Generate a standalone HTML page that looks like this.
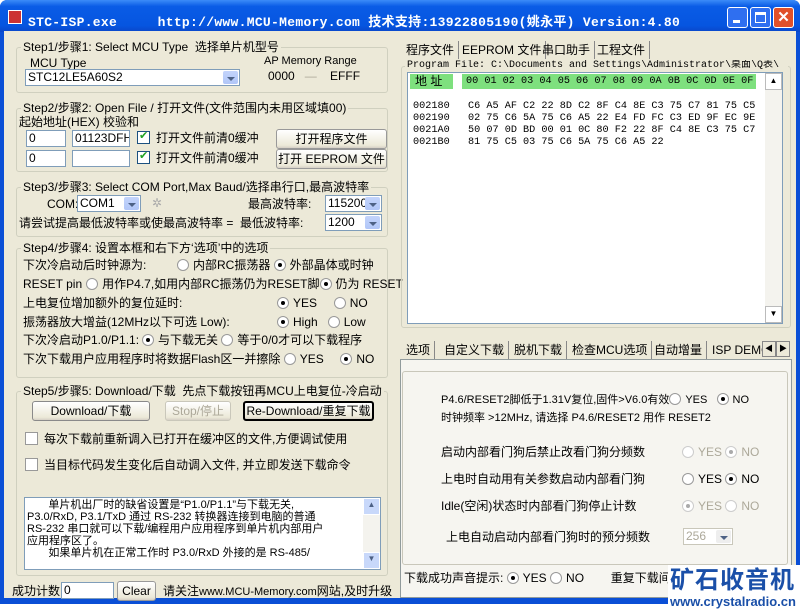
<!DOCTYPE html>
<html><head><meta charset="utf-8"><style>
*{box-sizing:border-box;margin:0;padding:0}
body{width:800px;height:611px;background:#fff;position:relative;overflow:hidden;font:12px/14px "Liberation Sans","Noto Sans CJK SC",sans-serif;color:#000}
.a{position:absolute;white-space:nowrap}
#win{position:absolute;left:0;top:0;width:800px;height:604px;background:#0a4fd6;border-radius:7px 7px 0 0}
#title{position:absolute;left:0;top:0;width:800px;height:32px;border-radius:7px 7px 0 0;background:linear-gradient(#3c8cf8,#0a5ce6 20%,#0655e0 80%,#0a46c8)}
#body{position:absolute;left:4px;top:31px;width:792px;height:567px;background:#ece9d8}
.g{position:absolute;border:1px solid #d0d0bf;border-radius:3px}
.lg{position:absolute;background:#ece9d8;padding:0 2px;top:-8px;left:4px;white-space:nowrap}
.in{position:absolute;background:#fff;border:1px solid #7f9db9;padding-left:2px;line-height:15px;height:17px;white-space:nowrap;overflow:hidden}
.btn{position:absolute;border:1px solid #003c74;border-radius:3px;background:linear-gradient(#fff,#ece9d8 85%,#d6d0c5);text-align:center;line-height:18px;white-space:nowrap}
.dd{position:absolute;right:1px;top:1px;bottom:1px;width:15px;background:linear-gradient(#c3d4fb,#b1c6f8);border-radius:2px}
.dd:after{content:"";position:absolute;left:4px;top:6px;border:4px solid transparent;border-top:4px solid #4d6185;border-bottom:0}
.r{display:inline-block;width:12px;height:12px;border-radius:50%;border:1px solid #999;background:#fff;vertical-align:-2px;position:relative;margin-right:4px}
.r.on:after{content:"";position:absolute;left:3px;top:3px;width:4px;height:4px;border-radius:50%;background:#000}
.r.dis{border-color:#ccc}.r.dis.on:after{background:#aaa}
.cb{display:inline-block;width:13px;height:13px;border:1px solid #1c5180;background:#fff;vertical-align:-2px;margin-right:6px;position:relative}
.cb.on:after{content:"✔";position:absolute;left:1px;top:-1px;font-size:11px;line-height:11px;color:#21a121}
.tab{position:absolute;top:0;height:18px;border-right:1px solid #888;padding:0 4px;line-height:18px}
.hex{font:10.2px/12px "Liberation Mono",monospace}
.grey{color:#aca899}
</style></head><body>
<div id="win"></div>
<div id="title"></div>
<div class="a" style="left:8px;top:10px;width:14px;height:14px;background:#c33;border:1px solid #fff"></div>
<div class="a" style="left:28px;top:11px;color:#fff;font:bold 13px 'Liberation Mono','Noto Sans CJK SC',monospace;letter-spacing:0.3px">STC-ISP.exe&nbsp;&nbsp;&nbsp;&nbsp;&nbsp;http://www.MCU-Memory.com 技术支持:13922805190(姚永平) Version:4.80</div>
<div class="a" style="left:727px;top:7px;width:21px;height:21px;border:1px solid #fff;border-radius:3px;background:#2f6ff0"><div style="position:absolute;left:5px;top:12px;width:7px;height:3px;background:#fff"></div></div>
<div class="a" style="left:750px;top:7px;width:21px;height:21px;border:1px solid #fff;border-radius:3px;background:#2f6ff0"><div style="position:absolute;left:4px;top:4px;width:11px;height:11px;border:1px solid #fff;border-top-width:3px"></div></div>
<div class="a" style="left:773px;top:7px;width:21px;height:21px;border:1px solid #fff;border-radius:3px;background:#e0502a;color:#fff;font:bold 15px 'Liberation Sans',sans-serif;text-align:center;line-height:19px">✕</div>
<div id="body"></div>

<!-- Step1 -->
<div class="g" style="left:16px;top:47px;width:372px;height:46px"><div class="lg">Step1/步骤1: Select MCU Type &nbsp;选择单片机型号</div></div>
<div class="a" style="left:30px;top:56px">MCU Type</div>
<div class="in" style="left:25px;top:69px;width:215px">STC12LE5A60S2<div class="dd"></div></div>
<div class="a" style="left:264px;top:54px;font-size:11px">AP Memory Range</div>
<div class="a" style="left:268px;top:69px">0000 &nbsp;&nbsp;<span class="grey">—</span>&nbsp;&nbsp;&nbsp; EFFF</div>

<!-- Step2 -->
<div class="g" style="left:16px;top:108px;width:372px;height:64px"><div class="lg">Step2/步骤2: Open File / 打开文件(文件范围内未用区域填00)</div></div>
<div class="a" style="left:19px;top:115px;background:#ece9d8">起始地址(HEX) 校验和</div>
<div class="in" style="left:26px;top:130px;width:40px">0</div>
<div class="in" style="left:72px;top:130px;width:58px">01123DFH</div>
<div class="a" style="left:137px;top:131px"><span class="cb on"></span>打开文件前清0缓冲</div>
<div class="btn" style="left:276px;top:129px;width:111px;border-color:#999">打开程序文件</div>
<div class="in" style="left:26px;top:150px;width:40px">0</div>
<div class="in" style="left:72px;top:150px;width:58px"></div>
<div class="a" style="left:137px;top:151px"><span class="cb on"></span>打开文件前清0缓冲</div>
<div class="btn" style="left:276px;top:149px;width:111px;border-color:#999">打开 EEPROM 文件</div>

<!-- Step3 -->
<div class="g" style="left:16px;top:187px;width:372px;height:50px"><div class="lg">Step3/步骤3: Select COM Port,Max Baud/选择串行口,最高波特率</div></div>
<div class="a" style="left:47px;top:197px">COM:</div>
<div class="in" style="left:77px;top:195px;width:64px">COM1<div class="dd"></div></div>
<div class="a" style="left:152px;top:196px;color:#aaa">✲</div>
<div class="a" style="left:248px;top:197px">最高波特率:</div>
<div class="in" style="left:325px;top:195px;width:57px">115200<div class="dd"></div></div>
<div class="a" style="left:19px;top:216px">请尝试提高最低波特率或使最高波特率 = &nbsp;最低波特率:</div>
<div class="in" style="left:325px;top:214px;width:57px">1200<div class="dd"></div></div>

<!-- Step4 -->
<div class="g" style="left:16px;top:248px;width:372px;height:130px"><div class="lg">Step4/步骤4: 设置本框和右下方‘选项’中的选项</div></div>
<div class="a" style="left:23px;top:258px">下次冷启动后时钟源为:</div>
<div class="a" style="left:177px;top:258px"><span class="r"></span>内部RC振荡器 <span class="r on"></span>外部晶体或时钟</div>
<div class="a" style="left:23px;top:277px">RESET pin<span class="r" style="margin-left:4px"></span>用作P4.7,如用内部RC振荡仍为RESET脚<span class="r on"></span>仍为 RESET</div>
<div class="a" style="left:23px;top:296px">上电复位增加额外的复位延时:</div>
<div class="a" style="left:277px;top:296px"><span class="r on"></span>YES &nbsp;&nbsp;&nbsp;&nbsp;<span class="r"></span>NO</div>
<div class="a" style="left:23px;top:315px">振荡器放大增益(12MHz以下可选 Low):</div>
<div class="a" style="left:277px;top:315px"><span class="r on"></span>High &nbsp;&nbsp;<span class="r"></span>Low</div>
<div class="a" style="left:23px;top:333px">下次冷启动P1.0/P1.1:<span class="r on" style="margin-left:3px"></span>与下载无关 <span class="r"></span>等于0/0才可以下载程序</div>
<div class="a" style="left:23px;top:352px">下次下载用户应用程序时将数据Flash区一并擦除 <span class="r"></span>YES &nbsp;&nbsp;&nbsp;&nbsp;<span class="r on"></span>NO</div>

<!-- Step5 -->
<div class="g" style="left:16px;top:391px;width:372px;height:185px"><div class="lg">Step5/步骤5: Download/下载 &nbsp;先点下载按钮再MCU上电复位-冷启动</div></div>
<div class="btn" style="left:32px;top:401px;width:118px;border-color:#8a8a8a">Download/下载</div>
<div class="btn grey" style="left:165px;top:401px;width:66px;border-color:#c9c7ba">Stop/停止</div>
<div class="btn" style="left:243px;top:401px;width:131px;border:2px solid #000;line-height:16px">Re-Download/重复下载</div>
<div class="a" style="left:25px;top:432px"><span class="cb" style="border-color:#999"></span>每次下载前重新调入已打开在缓冲区的文件,方便调试使用</div>
<div class="a" style="left:25px;top:458px"><span class="cb" style="border-color:#999"></span>当目标代码发生变化后自动调入文件, 并立即发送下载命令</div>
<div class="a" style="left:24px;top:497px;width:357px;height:73px;background:#fff;border:1px solid #7f9db9;overflow:hidden;line-height:12px;font-size:11px;white-space:normal;padding:1px 20px 0 2px">
&nbsp;&nbsp;&nbsp;&nbsp;&nbsp;&nbsp;&nbsp;单片机出厂时的缺省设置是“P1.0/P1.1”与下载无关,<br>P3.0/RxD, P3.1/TxD 通过 RS-232 转换器连接到电脑的普通<br>RS-232 串口就可以下载/编程用户应用程序到单片机内部用户<br>应用程序区了。<br>&nbsp;&nbsp;&nbsp;&nbsp;&nbsp;&nbsp;&nbsp;如果单片机在正常工作时 P3.0/RxD 外接的是 RS-485/
<div style="position:absolute;right:0;top:0;width:17px;height:71px;background:#f4f3ee"><div style="height:17px;background:#c8d8fa;border:1px solid #fff;font-size:8px;text-align:center;color:#4d6185">▲</div><div style="position:absolute;bottom:0;width:17px;height:17px;background:#c8d8fa;border:1px solid #fff;font-size:8px;text-align:center;color:#4d6185">▼</div></div></div>

<div class="a" style="left:12px;top:584px">成功计数</div>
<div class="in" style="left:61px;top:582px;width:53px">0</div>
<div class="btn" style="left:117px;top:581px;width:39px;border-color:#999">Clear</div>
<div class="a" style="left:163px;top:584px">请关注<span style="font-size:11px">www.MCU-Memory.com</span>网站,及时升级</div>

<!-- Right top tabs -->
<div class="a" style="left:400px;top:41px;width:390px;height:18px">
<div class="tab" style="left:2px">程序文件</div>
<div class="tab" style="left:58px">EEPROM 文件</div>
<div class="tab" style="left:138px">串口助手</div>
<div class="tab" style="left:193px">工程文件</div>
</div>
<div class="g" style="left:401px;top:66px;width:390px;height:262px"></div>
<div class="a" style="left:405px;top:60px;width:383px;overflow:hidden;background:#ece9d8;font:10px/12px 'Liberation Mono','Noto Sans CJK SC',monospace;padding-left:2px">Program File: C:\Documents and Settings\Administrator\桌面\Q表\</div>
<div class="a" style="left:407px;top:72px;width:376px;height:252px;background:#fff;border:1px solid #7f9db9"></div>
<div class="a" style="left:410px;top:74px;width:43px;height:15px;background:#7ee07e;line-height:15px;padding-left:5px">地 址</div>
<div class="a hex" style="left:462px;top:74px;width:294px;height:15px;background:#7ee07e;line-height:15px;padding-left:4px">00 01 02 03 04 05 06 07 08 09 0A 0B 0C 0D 0E 0F</div>
<div class="a hex" style="left:413px;top:101px">002180&nbsp;&nbsp;&nbsp;C6 A5 AF C2 22 8D C2 8F C4 8E C3 75 C7 81 75 C5<br>002190&nbsp;&nbsp;&nbsp;02 75 C6 5A 75 C6 A5 22 E4 FD FC C3 ED 9F EC 9E<br>0021A0&nbsp;&nbsp;&nbsp;50 07 0D BD 00 01 0C 80 F2 22 8F C4 8E C3 75 C7<br>0021B0&nbsp;&nbsp;&nbsp;81 75 C5 03 75 C6 5A 75 C6 A5 22</div>
<div class="a" style="left:765px;top:73px;width:17px;height:250px;background:#f4f3ee">
<div style="height:17px;background:#fff;border:1px solid #bbb;font-size:8px;text-align:center;color:#000">▲</div>
<div style="position:absolute;bottom:0;width:17px;height:17px;background:#fff;border:1px solid #bbb;font-size:8px;text-align:center">▼</div></div>

<!-- Right bottom tabs -->
<div class="a" style="left:400px;top:341px;width:392px;height:18px">
<div class="tab" style="left:2px">选项</div>
<div class="tab" style="left:40px">自定义下载</div>
<div class="tab" style="left:110px">脱机下载</div>
<div class="tab" style="left:168px">检查MCU选项</div>
<div class="tab" style="left:250px">自动增量</div>
<div class="tab" style="left:308px;border:none">ISP DEMO</div>
<div class="a" style="left:362px;top:0;width:14px;height:16px;border:1px solid #888;background:#ece9d8;font-size:8px;text-align:center;line-height:14px">◀</div>
<div class="a" style="left:376px;top:0;width:14px;height:16px;border:1px solid #888;background:#ece9d8;font-size:8px;text-align:center;line-height:14px">▶</div>
</div>
<div class="a" style="left:400px;top:359px;width:392px;height:239px;border:1px solid #919b9c;background:#f6f5f0"></div>
<div class="g" style="left:402px;top:371px;width:386px;height:194px;border-color:#c9c7ba"></div>
<div class="a" style="left:441px;top:393px;font-size:11px">P4.6/RESET2脚低于1.31V复位,固件&gt;V6.0有效<span class="r"></span>YES &nbsp;&nbsp;<span class="r on"></span>NO</div>
<div class="a" style="left:441px;top:411px;font-size:11px">时钟频率 &gt;12MHz, 请选择 P4.6/RESET2 用作 RESET2</div>
<div class="a" style="left:441px;top:445px">启动内部看门狗后禁止改看门狗分频数</div>
<div class="a grey" style="left:682px;top:445px"><span class="r dis"></span>YES <span class="r dis on"></span>NO</div>
<div class="a" style="left:441px;top:472px">上电时自动用有关参数启动内部看门狗</div>
<div class="a" style="left:682px;top:472px"><span class="r"></span>YES <span class="r on"></span>NO</div>
<div class="a" style="left:441px;top:499px">Idle(空闲)状态时内部看门狗停止计数</div>
<div class="a grey" style="left:682px;top:499px"><span class="r dis on"></span>YES <span class="r dis"></span>NO</div>
<div class="a" style="left:446px;top:530px">上电自动启动内部看门狗时的预分频数</div>
<div class="in grey" style="left:683px;top:528px;width:50px;border-color:#c9c7ba">256<div class="dd" style="background:#eee"></div></div>
<div class="a" style="left:404px;top:571px">下载成功声音提示: <span class="r on"></span>YES <span class="r"></span>NO &nbsp;&nbsp;&nbsp;&nbsp;&nbsp;&nbsp;&nbsp;重复下载间</div>

<!-- watermark -->
<div class="a" style="left:668px;top:565px;width:132px;height:46px;background:#fff"></div>
<div class="a" style="left:670px;top:563px;color:#1a4fa8;font:bold 24px/30px 'Noto Sans CJK SC',sans-serif;letter-spacing:1px">矿石收音机</div>
<div class="a" style="left:670px;top:594px;color:#1a4fa8;font:bold 13px/15px 'Liberation Sans',sans-serif">www.crystalradio.cn</div>
</body></html>
